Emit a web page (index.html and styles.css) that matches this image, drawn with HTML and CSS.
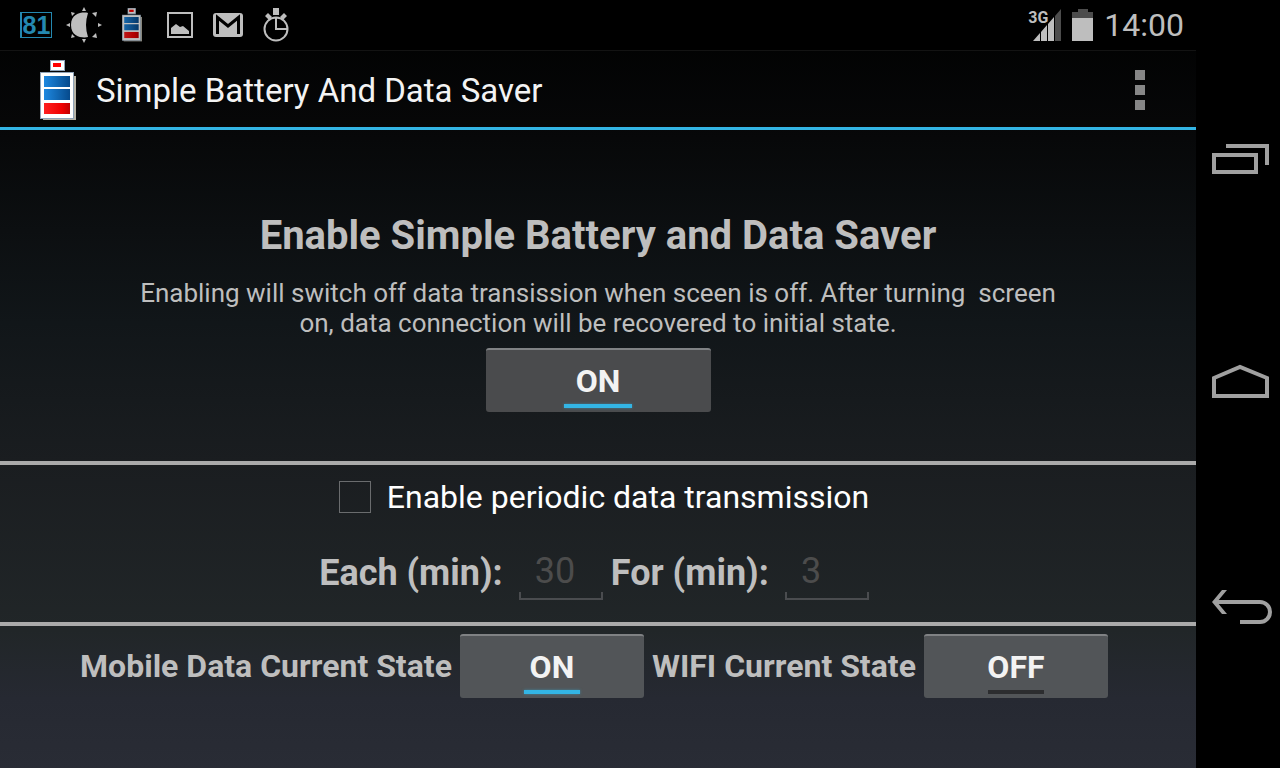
FILE: index.html
```
<!DOCTYPE html>
<html lang="en">
<head>
    <meta charset="UTF-8">
    <meta name="viewport" content="width=device-width, initial-scale=1.0">
    <title>Simple Battery And Data Saver</title>
    <link rel="stylesheet" href="styles.css">
</head>
<body>
    <!-- shared battery logo -->
    <svg class="defs" width="0" height="0" aria-hidden="true">
        <defs>
            <linearGradient id="blue" x1="0" x2="1">
                <stop offset="0" stop-color="#1e88e0"/>
                <stop offset="1" stop-color="#064a8c"/>
            </linearGradient>
            <linearGradient id="red" x1="0" x2="1">
                <stop offset="0" stop-color="#ff2020"/>
                <stop offset="0.7" stop-color="#ee0000"/>
                <stop offset="1" stop-color="#c00000"/>
            </linearGradient>
            <symbol id="battery-logo" viewBox="0 0 36 61">
                <path fill="#b5b2a6" d="M3 16h33v44H3z"/>
                <path fill="#8fa3b8" d="M10 0h15v11H10zM0 12h34v47H0z"/>
                <path fill="#fff" d="M11 1h13v9H11zM1 13h32v45H1z"/>
                <path fill="#f00" d="M13 3h8v4h-8z"/>
                <path fill="url(#blue)" d="M4 16h26v11H4zM4 29h26v11H4z"/>
                <path fill="url(#red)" d="M4 43h26v11H4z"/>
            </symbol>
        </defs>
    </svg>

    <div class="screen">
        <div class="window">
            <div class="status-bar">
                <div class="notifications">
                    <div class="notification"><span class="level">81</span></div>
                    <div class="notification">
                        <svg width="36" height="36" viewBox="0 0 36 36" fill="#bebebe">
                            <path d="M22 6C18 5 5 5 5 18s13 13 17 12Q20 24 20 18T22 6z"/>
                            <path d="M18 0l2 4h-4zM18 36l2-4h-4zM0 18l4-2v4zM36 18l-4-2v4zM5 5l4 1-3 3zM5 31l4-1-3-3zM31 5l-5 1 4 4zM31 31l-5-1 4-4z"/>
                        </svg>
                    </div>
                    <div class="notification">
                        <svg class="logo-small" width="20" height="34"><use href="#battery-logo"/></svg>
                    </div>
                    <div class="notification">
                        <svg width="26" height="26" viewBox="0 0 26 26">
                            <path fill="none" stroke="#bebebe" stroke-width="2" d="M1 1h24v24H1z"/>
                            <path fill="#bebebe" d="M4 22v-6l5-4 4 3 3-1 6 5v3z"/>
                        </svg>
                    </div>
                    <div class="notification">
                        <svg width="30" height="24" viewBox="0 0 30 24">
                            <rect width="30" height="24" rx="3" fill="#bebebe"/>
                            <path fill="none" stroke="#000" stroke-width="3" d="M4.500 21V4.500L15 13 25.500 4.500V21"/>
                        </svg>
                    </div>
                    <div class="notification">
                        <svg width="28" height="34" viewBox="0 0 28 34">
                            <circle cx="14" cy="21" r="11.500" fill="none" stroke="#bebebe" stroke-width="2"/>
                            <path fill="none" stroke="#bebebe" stroke-width="2" d="M14 9v12h11"/>
                            <path fill="#bebebe" d="M11 0h6v7h-6zM3 8l3-3 4 4-3 3zM25 8l-3-3-4 4 3 3z"/>
                        </svg>
                    </div>
                </div>
                <div class="system-icons">
                    <div class="signal">
                        <svg width="28" height="32" viewBox="0 0 28 32">
                            <path fill="#bebebe" d="M0 32l7-8v8zM8 32v-9l6-7v16zM15 32V15l6-7v24z"/>
                            <path fill="#4c4c4c" d="M22 32V7l6-7v32z"/>
                        </svg>
                        <span class="network">3G</span>
                    </div>
                    <svg width="21" height="32" viewBox="0 0 21 32">
                        <path fill="#4c4c4c" d="M6 0h10v3h5v6H0V3h6z"/>
                        <path fill="#bebebe" d="M0 9h21v23H0z"/>
                    </svg>
                    <span class="clock">14:00</span>
                </div>
            </div>

            <header class="action-bar">
                <svg width="36" height="61"><use href="#battery-logo"/></svg>
                <h1>Simple Battery And Data Saver</h1>
                <button class="overflow" type="button" aria-label="More options">
                    <svg width="10" height="40" viewBox="0 0 10 40" fill="#868686">
                        <path d="M0 0h10v10H0zM0 15h10v10H0zM0 30h10v10H0z"/>
                    </svg>
                </button>
            </header>

            <main>
                <section class="enable">
                    <h2>Enable Simple Battery and Data Saver</h2>
                    <p>Enabling will switch off data transission when sceen is off. After turning&nbsp; screen on, data connection will be recovered to initial state.</p>
                    <button class="toggle toggle-wide on" type="button" aria-pressed="true">ON</button>
                </section>

                <section class="periodic">
                    <label class="check">
                        <input type="checkbox">
                        Enable periodic data transmission
                    </label>
                    <div class="times">
                        <label for="each">Each (min):</label>
                        <input type="text" id="each" value="30" disabled>
                        <label for="for">For (min):</label>
                        <input type="text" id="for" value="3" disabled>
                    </div>
                </section>

                <section class="states">
                    <span id="mobile-label">Mobile Data Current State</span>
                    <button class="toggle on" type="button" aria-pressed="true" aria-describedby="mobile-label">ON</button>
                    <span id="wifi-label">WIFI Current State</span>
                    <button class="toggle" type="button" aria-pressed="false" aria-describedby="wifi-label">OFF</button>
                </section>
            </main>
        </div>

        <nav class="nav-bar">
            <button type="button" aria-label="Recent apps">
                <svg width="64" height="40" viewBox="0 0 64 40" fill="none" stroke="#a0a0a0" stroke-width="4">
                    <path d="M6 17h42v17H6zM18 8h41v19"/>
                </svg>
            </button>
            <button type="button" aria-label="Home">
                <svg width="64" height="40" viewBox="0 0 64 40" fill="none" stroke="#a0a0a0" stroke-width="4">
                    <path d="M6 33V15L32 4l27 11v18z"/>
                </svg>
            </button>
            <button type="button" aria-label="Back">
                <svg width="64" height="40" viewBox="0 0 64 40" fill="none" stroke="#a0a0a0" stroke-width="4">
                    <path d="M7 14h45a10 10 0 0 1 0 20H32"/>
                    <path fill="#a0a0a0" stroke="none" d="M4 14L14 2h5L9 14l10 12h-5z"/>
                </svg>
            </button>
        </nav>
    </div>
</body>
</html>
```
FILE: styles.css
```
* {
    box-sizing: border-box;
}
body {
    margin: 0;
    background-color: #000;
    color: #bebebe;
    font-family: Roboto, "Noto Sans", sans-serif;
}
button {
    font-family: inherit;
    border: none;
    padding: 0;
    background: none;
    cursor: pointer;
}
svg {
    display: block;
}
.defs {
    position: absolute;
}
.screen {
    display: flex;
    min-height: 100vh;
}
.window {
    flex: 1;
    display: flex;
    flex-direction: column;
    background: linear-gradient(#000, #070809 18%, #111619 42%, #1a1d20 60%, #212628 82%, #262932 91%, #292c35);
}

/* status bar */
.status-bar {
    display: flex;
    justify-content: space-between;
    align-items: center;
    height: 51px;
    padding: 0 12px;
    background-color: #000;
    border-bottom: 1px solid #131313;
}
.notifications {
    display: flex;
}
.notification {
    display: flex;
    align-items: center;
    justify-content: center;
    width: 48px;
}
.level {
    width: 32px;
    height: 26px;
    border: 1px solid #2488b0;
    border-left-width: 2px;
    color: #2488b0;
    font-family: "Liberation Sans", sans-serif;
    font-size: 25px;
    font-weight: bold;
    line-height: 25px;
    text-align: center;
}
.logo-small {
    opacity: 0.75;
}
.system-icons {
    display: flex;
    align-items: center;
    gap: 11px;
}
.signal {
    position: relative;
}
.network {
    position: absolute;
    top: 0;
    left: -5px;
    font-size: 16px;
    font-weight: bold;
    line-height: 18px;
}
.clock {
    font-size: 32px;
    line-height: 48px;
}

/* action bar */
.action-bar {
    display: flex;
    align-items: center;
    height: 79px;
    padding: 2px 36px 0 40px;
    border-bottom: 3px solid #33b5e5;
}
h1 {
    flex: 1;
    margin: 0 0 0 20px;
    color: #f3f3f3;
    font-size: 33px;
    font-weight: normal;
}
.overflow {
    padding: 0 15px;
}

/* content */
main {
    flex: 1;
    display: flex;
    flex-direction: column;
}
section {
    text-align: center;
}
.enable {
    flex: 1;
    display: flex;
    flex-direction: column;
    align-items: center;
    justify-content: center;
    padding-top: 32px;
    border-bottom: 4px solid #aaa;
}
h2 {
    margin: 0 0 18px;
    font-size: 40px;
    line-height: 48px;
}
p {
    max-width: 940px;
    margin: 0 0 10px;
    font-size: 26px;
    line-height: 30px;
}
.toggle {
    position: relative;
    width: 184px;
    height: 64px;
    border-top: 2px solid #808284;
    border-radius: 3px;
    background-color: #525558;
    color: #f3f3f3;
    font-size: 32px;
    font-weight: bold;
}
.toggle::after {
    content: "";
    position: absolute;
    left: 35%;
    right: 35%;
    bottom: 4px;
    height: 4px;
    background-color: #2c2d2f;
}
.toggle.on::after {
    background-color: #33b5e5;
    box-shadow: 0 0 3px #33b5e580;
}
.toggle-wide {
    width: 225px;
    background-color: #4a4b4d;
}
.periodic {
    padding: 8px 0 22px;
    border-bottom: 4px solid #aaa;
}
.check {
    display: flex;
    align-items: center;
    justify-content: center;
    gap: 16px;
    padding-left: 12px;
    color: #fff;
    font-size: 32px;
    line-height: 48px;
}
.check input {
    appearance: none;
    width: 32px;
    height: 32px;
    margin: 0;
    border: 1px solid #6a6c6e;
}
.times {
    display: flex;
    align-items: center;
    justify-content: center;
    gap: 8px;
    margin-top: 24px;
    padding-right: 8px;
    font-size: 36px;
    font-weight: bold;
    line-height: 48px;
}
.times input {
    width: 84px;
    height: 55px;
    margin-left: 8px;
    padding: 0 16px 4px;
    border: none;
    background:
        linear-gradient(#4a4c4f, #4a4c4f) left bottom / 2px 8px no-repeat,
        linear-gradient(#4a4c4f, #4a4c4f) right bottom / 2px 8px no-repeat,
        linear-gradient(#4a4c4f, #4a4c4f) bottom / 100% 2px no-repeat;
    color: #4c4c4c;
    font-family: inherit;
    font-size: 36px;
}
.states {
    display: flex;
    align-items: center;
    justify-content: center;
    gap: 8px;
    padding: 8px 8px 70px 0;
    font-size: 32px;
    font-weight: bold;
}

/* navigation bar */
.nav-bar {
    display: flex;
    flex-direction: column;
    justify-content: space-between;
    width: 84px;
    padding: 138px 0 140px 12px;
    background-color: #000;
}
```
